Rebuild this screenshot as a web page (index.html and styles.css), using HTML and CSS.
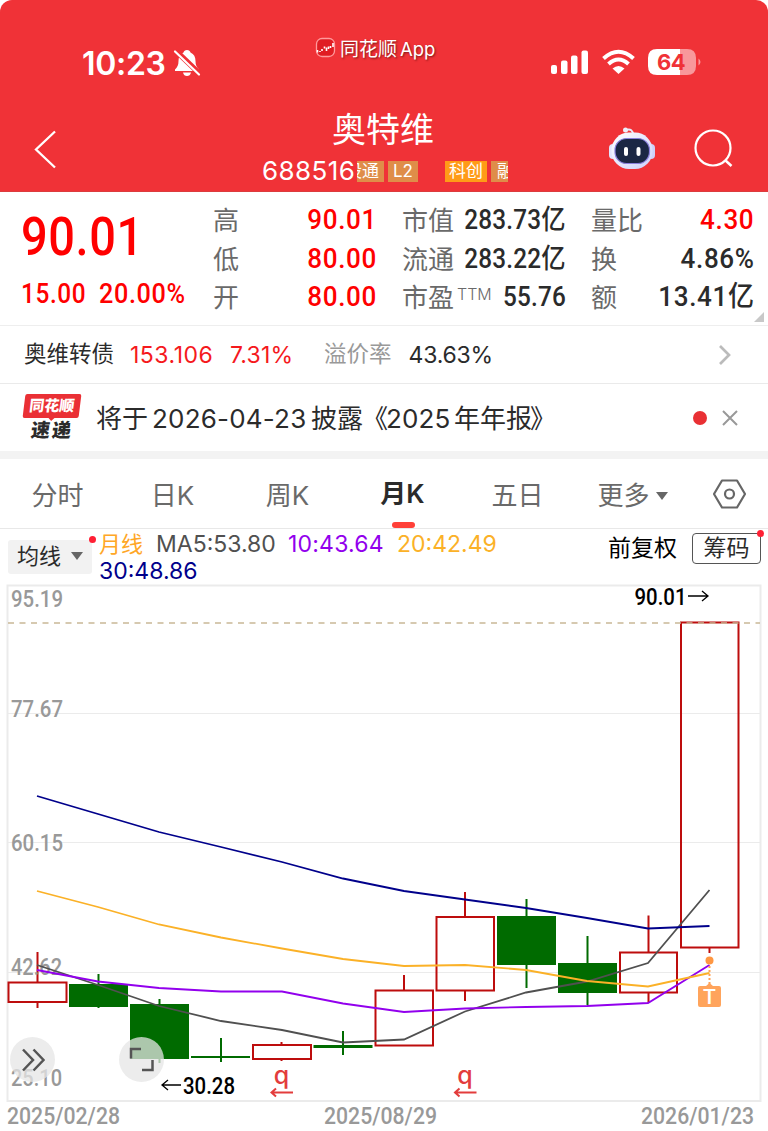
FILE: index.html
```
<!DOCTYPE html>
<html lang="zh-CN">
<head>
    <meta charset="utf-8">
    <title>奥特维 688516</title>
    <link rel="stylesheet" href="styles.css">
</head>
<body>

<header>
    <div class="status">
        <div class="time"><span>10:23</span>
            <svg width="28" height="30" viewBox="0 0 28 30"><path d="M14 1c-2 0-3 1-3.500 2.500C7 5 5.500 8 5.500 12c0 4-1 6-3.500 8.500V22h24v-1.500C23.500 18 22.500 16 22.500 12c0-4-1.500-7-5-8.500C17 2 16 1 14 1z M10 23.500h8c-.5 2.500-2 3.500-4 3.500s-3.500-1-4-3.500z" fill="#fff"/><path d="M3 2L27 25" stroke="#f03237" stroke-width="5.500"/><path d="M2 2.500L26 25.500" stroke="#fff" stroke-width="2.200" stroke-linecap="round"/></svg>
        </div>
        <div class="brand">
            <svg width="22" height="22" viewBox="0 0 22 22"><rect x="1.500" y="1.500" width="18" height="18" rx="5.500" fill="#e01d23" stroke="#ff9a9c" stroke-width="1.300"/><path d="M2.500 13v2.500M5 14v1M7 12v2M9.500 9.500v2M11.500 10.500v3.500M13.500 9.500v2.500M15.500 9v2M18 6v4" stroke="#fff" stroke-width="1.600"/></svg>
            <span>同花顺<em>App</em></span>
        </div>
        <svg class="phone" width="152" height="30" viewBox="0 0 152 30">
            <g fill="#fff"><rect x="1" y="17" width="6" height="9" rx="2"/><rect x="11" y="12.500" width="6.500" height="13.500" rx="2"/><rect x="21" y="7.500" width="6.500" height="18.500" rx="2"/><rect x="31.500" y="2.500" width="6.500" height="23.500" rx="2"/></g>
            <g fill="none" stroke="#fff" stroke-width="4"><path d="M53.500 10.500q15-13.500 30 0"/><path d="M58.500 16q10-9 20 0"/></g><path d="M62.500 20.500q6-5 12 0L68.500 26z" fill="#fff"/>
            <path d="M137 1h-7v26h7q9 0 9-9v-8q0-9-9-9z" fill="#f8989b"/><path d="M130 1h-23q-9 0-9 9v8q0 9 9 9h23z" fill="#fff"/><path d="M148.500 10.500v7q4-3.500 0-7z" fill="#f8989b"/>
            <text x="121" y="21.500" text-anchor="middle" class="battery">64</text>
        </svg>
    </div>
    <div class="nav">
        <svg width="24" height="40" viewBox="0 0 24 40"><path d="M22 1.500L3 19.500l19 18" fill="none" stroke="#fff" stroke-width="2.300"/></svg>
        <div class="stock">
            <h1>奥特维</h1>
            <div class="code"><span class="digits">688516</span><span class="tag cut-left">股通</span><span class="tag l2">L2</span><span class="tag star">科创</span><span class="tag cut-right">融</span></div>
        </div>
        <div class="tools">
            <svg width="48" height="44" viewBox="0 0 48 44">
                <defs><linearGradient id="shell" x2="1" y2="1"><stop stop-color="#fff"/><stop offset="1" stop-color="#cdd1fb"/></linearGradient></defs>
                <path d="M18 4q7-2 7 5" fill="none" stroke="#e8e9fb" stroke-width="2"/><circle cx="17.500" cy="4" r="2.500" fill="#eeeefa"/>
                <rect x="1" y="18" width="8" height="15" rx="4" fill="#e2e4fc"/><rect x="39" y="18" width="8" height="15" rx="4" fill="#ced1fa"/>
                <rect x="3.500" y="6.500" width="41" height="36.500" rx="17.500" fill="url(#shell)"/>
                <rect x="7" y="12.500" width="34.500" height="25" rx="11.500" fill="#1b2744" stroke="#8a80dc" stroke-width="1.200"/>
                <rect x="16" y="21" width="4" height="9" rx="2" fill="#fff"/><rect x="28.500" y="21" width="4" height="9" rx="2" fill="#fff"/>
            </svg>
            <svg width="42" height="44" viewBox="0 0 42 44"><circle cx="21" cy="22" r="17.500" fill="none" stroke="#fff" stroke-width="2.200"/><path d="M33 34l6.500 6" stroke="#fff" stroke-width="2.500"/></svg>
        </div>
    </div>
</header>

<section class="quote">
    <div class="last">
        <div class="price"><b class="din">90.01</b></div>
        <div class="change"><b class="din">15.00</b><b class="din">20.00%</b></div>
    </div>
    <dl>
        <dt>高</dt><dd class="up"><b class="din">90.01</b></dd>
        <dt>低</dt><dd class="up"><b class="din">80.00</b></dd>
        <dt>开</dt><dd class="up"><b class="din">80.00</b></dd>
    </dl>
    <dl class="cap">
        <dt>市值</dt><dd><b class="din">283.73亿</b></dd>
        <dt>流通</dt><dd><b class="din">283.22亿</b></dd>
        <dt>市盈<sup>TTM</sup></dt><dd><b class="din">55.76</b></dd>
    </dl>
    <dl>
        <dt>量比</dt><dd class="up"><b class="din">4.30</b></dd>
        <dt>换</dt><dd><b class="din">4.86%</b></dd>
        <dt>额</dt><dd><b class="din">13.41亿</b></dd>
    </dl>
    <i class="corner"></i>
</section>

<section class="bond">
    <span class="name">奥维转债</span><span class="up v1">153.106</span><span class="up v2">7.31%</span><span class="gray">溢价率</span><span class="v3">43.63%</span>
    <svg width="14" height="22" viewBox="0 0 14 22"><path d="M2 2l9 9-9 9" fill="none" stroke="#bbb" stroke-width="2.700"/></svg>
</section>

<section class="notice">
    <div class="express"><span class="ths">同花顺</span><span class="sudi">速递</span></div>
    <p>将于<span class="date">2026-04-23</span>披露<span class="book">《</span><span class="year">2025</span>年年报<span class="end">》</span></p>
    <i class="dot"></i>
    <svg width="16" height="16" viewBox="0 0 16 16"><path d="M1 1l14 14M15 1L1 15" stroke="#999" stroke-width="2"/></svg>
</section>

<nav>
    <a>分时</a><a>日K</a><a>周K</a><a class="on">月K</a><a>五日</a><a>更多<i class="caret"></i></a>
    <svg width="34" height="30" viewBox="0 0 34 30"><path d="M10 1.500h15L33 15l-8 13.500H10L2 15z" fill="none" stroke="#666" stroke-width="2.200" stroke-linejoin="round"/><circle cx="17.500" cy="15" r="4.500" fill="none" stroke="#666" stroke-width="2.200"/></svg>
</nav>

<section class="legend">
    <div class="ma">均线<i class="caret"></i></div>
    <div class="values">
        <div><span class="cycle">月线</span><span class="ma5">MA5:53.80</span><span class="ma10">10:43.64</span><span class="ma20">20:42.49</span></div>
        <div class="ma30">30:48.86</div>
    </div>
    <div class="adjust">前复权</div>
    <div class="chips">筹码</div>
</section>

<svg class="chart" width="768" height="551" viewBox="0 580 768 551">
    <g class="grid"><path d="M8 713.500H760M8 842.500H760M8 972.500H760"/><path d="M7.500 585.500H760.500V1101H7.500z" stroke-width="2"/></g>
    <g class="rise">
        <path d="M37.500 952v30M37.500 1002v6M281.500 1042v3M281.500 1059v2M404 975v15M465 892v25M465 991v10M648.500 915.500v37M648.500 993v10M709.500 948v5"/>
        <rect x="8.500" y="982.500" width="58" height="19.500"/>
        <rect x="253" y="1045" width="58" height="14"/>
        <rect x="375.500" y="990.500" width="57.500" height="55"/>
        <rect x="436.500" y="917" width="57.500" height="73.500"/>
        <rect x="620" y="952.500" width="57" height="40"/>
        <rect x="681" y="622.500" width="57.500" height="325"/>
    </g>
    <path d="M8 623H760" stroke="#c9b896" stroke-width="1.300" stroke-dasharray="6 5.500"/>
    <g class="axis">
        <text x="11" y="607" textLength="52" lengthAdjust="spacingAndGlyphs">95.19</text>
        <text x="11" y="717" textLength="52" lengthAdjust="spacingAndGlyphs">77.67</text>
        <text x="11" y="851" textLength="52" lengthAdjust="spacingAndGlyphs">60.15</text>
        <text x="11" y="975" textLength="51" lengthAdjust="spacingAndGlyphs">42.62</text>
        <text x="11" y="1086" textLength="51" lengthAdjust="spacingAndGlyphs">25.10</text>
        <text x="7" y="1124" textLength="113" lengthAdjust="spacingAndGlyphs">2025/02/28</text>
        <text x="324" y="1124" textLength="113" lengthAdjust="spacingAndGlyphs">2025/08/29</text>
        <text x="641" y="1124" textLength="113" lengthAdjust="spacingAndGlyphs">2026/01/23</text>
    </g>
    <g class="fall">
        <path d="M98.500 974v34M159.500 999v64M221 1038v24M343 1031v24M526.500 899v89M587.500 936v69"/>
        <rect x="69" y="984" width="59" height="23"/>
        <rect x="130" y="1004" width="59" height="55"/>
        <rect x="191" y="1056" width="59" height="2"/>
        <rect x="313.500" y="1045" width="59" height="3"/>
        <rect x="497" y="916" width="59" height="49"/>
        <rect x="558" y="963" width="59" height="30"/>
    </g>
    <g class="lines">
        <polyline points="37,965 98,985 159,1006 221,1021 282,1030 343,1042.500 404,1039.500 465,1011.500 526,992.500 587,981.500 648,963 709.500,890" stroke="#505050"/>
        <polyline points="37,970 98,981.500 159,988 221,991.500 282,991.500 343,1003.500 404,1012 465,1008.500 526,1007 587,1006 648,1003 709.500,965" stroke="#9200ed"/>
        <polyline points="37,891 98,907 159,924.500 221,937.500 282,948.500 343,959 404,966 465,965 526,970 587,981 648,986.500 709.500,973" stroke="#fbb127"/>
        <polyline points="37,796 98,814 159,832 221,847 282,862 343,878.500 404,891 465,899.500 526,908 587,918 648,928.500 709.500,926" stroke="#00008b"/>
    </g>
    <g class="marks">
        <text x="634.500" y="605" textLength="52" lengthAdjust="spacingAndGlyphs">90.01</text><text x="183" y="1093.500" textLength="52" lengthAdjust="spacingAndGlyphs">30.28</text>
        <path d="M688 596h20M702 591l6 5-6 5M181 1085h-19M168 1080l-6 5 6 5"/>
    </g>
    <g class="q">
        <text x="281.500" y="1084">q</text><text x="465" y="1084">q</text>
        <path d="M293 1092.500h-21M276 1088.500l-4.500 4 4.500 4M476.500 1092.500h-21M459.500 1088.500l-4.500 4 4.500 4"/>
    </g>
    <g class="trade"><path d="M709.500 962v22" stroke="#ffa155" stroke-width="2" stroke-dasharray="2 2"/><circle cx="709.500" cy="960.500" r="4" fill="#ff9742"/><path d="M700 986h6l3.500-3 3.500 3h6q2 0 2 2v17q0 2-2 2h-19q-2 0-2-2v-17q0-2 2-2z" fill="#ffa45c"/><text x="709.500" y="1003.500">T</text></g>
    <g class="buttons"><circle cx="32.500" cy="1059.500" r="22.500"/><circle cx="141.500" cy="1059.500" r="22.500"/><path d="M23 1049.500l10 10.500-10 10.500M33.500 1049.500l10 10.500-10 10.500M131 1058.500v-9.500h10M152.500 1060v10h-10.500"/></g>
</svg>

</body>
</html>
```
FILE: styles.css
```
* {
    box-sizing: border-box;
}
body {
    margin: 0;
    width: 768px;
    height: 1131px;
    overflow: hidden;
    background: #fff;
    color: #2b2b2b;
    font-family: Inter, "Noto Sans CJK SC", sans-serif;
    font-size: 23px;
    font-weight: 400;
}
svg {
    display: block;
    flex: none;
}
header {
    height: 192px;
    background: #f03237;
    color: #fff;
    border-radius: 12px 12px 0 0;
    border-bottom: 1px solid #dc3c3e;
}
.status {
    height: 102px;
    padding: 34px 66px 0 82px;
    display: flex;
    justify-content: space-between;
}
.time {
    display: flex;
    width: 233px;
    padding-top: 14px;
    font-size: 32px;
    line-height: 31px;
    font-weight: 600;
    letter-spacing: -.3px;
}
.time span {
    width: 91px;
}
.time svg {
    margin-top: 1px;
}
.brand {
    display: flex;
    gap: 3px;
    margin-top: 3px;
    height: 24px;
    line-height: 25px;
    font-size: 19px;
    text-shadow: 1px 1px 2px #7d1717;
    width: 235px;
    white-space: nowrap;
}
.brand em {
    font-style: normal;
    font-size: 18.500px;
    margin-left: 3px;
}
.phone {
    margin-top: 14px;
}
.battery {
    font-size: 22px;
    font-weight: 700;
    letter-spacing: -.5px;
    fill: #f03237;
}
.nav {
    height: 89px;
    display: flex;
    padding: 0 34px 0 33px;
}
.nav > svg {
    margin-top: 28px;
}
.stock {
    width: 247px;
    margin-left: 205px;
}
h1 {
    margin: 8px 0 0 -5px;
    font-size: 34px;
    line-height: 40px;
    font-weight: 400;
    text-align: center;
}
.code {
    display: flex;
    margin-top: 7px;
    height: 28px;
    line-height: 28px;
    align-items: center;
}
.digits {
    font-size: 26px;
    letter-spacing: .4px;
    width: 95px;
}
.tag {
    height: 21px;
    line-height: 20px;
    font-size: 17px;
    background: #df8d49;
    overflow: hidden;
    text-align: center;
    flex: none;
}
.cut-left {
    display: flex;
    justify-content: flex-end;
    width: 27px;
    padding-right: 5px;
    white-space: nowrap;
}
.l2 {
    width: 30px;
    margin-left: 4px;
}
.star {
    width: 42px;
    margin: 0 4px 0 27px;
    background: #ff9b17;
}
.cut-right {
    width: 17px;
    padding-left: 6px;
    text-align: left;
}
.tools {
    display: flex;
    gap: 36px;
    margin: 24px 0 0 auto;
}
.quote {
    position: relative;
    display: flex;
    height: 134px;
    padding: 9px 14px 0 21px;
    border-bottom: 1px solid #eee;
}
.din {
    display: inline-block;
    font-family: Roboto, "Noto Sans CJK SC", sans-serif;
    font-weight: 500;
    letter-spacing: .7px;
    margin-right: -.7px;
    transform: scaleX(.93);
    transform-origin: 100% 50%;
    white-space: nowrap;
}
.up {
    color: #f00;
}
.bond .up {
    color: #f5191d;
}
.last {
    width: 192px;
    color: #f00;
}
.last .din {
    transform: scaleX(.87);
    transform-origin: 0 50%;
}
.price {
    margin-top: 3px;
    height: 63px;
    line-height: 63px;
    font-size: 54px;
}
.change {
    display: flex;
    margin-top: 10px;
    line-height: 34px;
    font-size: 28px;
}
.change .din + .din {
    margin-left: 4px;
    transform: scaleX(.9);
}
.quote dl {
    display: grid;
    grid-template-columns: auto minmax(0, 1fr);
    grid-auto-rows: 38.500px;
    line-height: 38px;
    width: 163px;
    margin: 0 26px 0 0;
    font-size: 26px;
}
.quote dl:last-of-type {
    width: auto;
    flex: 1;
    margin-right: 0;
}
.quote .cap {
    width: 164px;
    margin-right: 25px;
}
.quote dt {
    color: #6a6a6a;
    white-space: nowrap;
    line-height: 40px;
}
.quote dd {
    margin: 0;
    font-size: 28px;
    display: flex;
    justify-content: flex-end;
}
.quote .cap dd {
    font-size: 27px;
}
.cap .din {
    letter-spacing: .2px;
    margin-right: 0;
    transform: scaleX(.9);
}
sup {
    font-size: 16px;
    font-weight: 300;
    line-height: 0;
    vertical-align: 7px;
    margin-left: 3px;
}
.corner {
    position: absolute;
    right: 4px;
    bottom: 3px;
    border: 5px solid transparent;
    border-color: transparent #c8c8c8 #c8c8c8 transparent;
}
.bond {
    display: flex;
    align-items: center;
    height: 58px;
    padding: 0 36px 0 24px;
    border-bottom: 1px solid #eaeaea;
}
.bond .name, .bond .gray {
    font-size: 22.500px;
    line-height: 30px;
    margin-top: -1px;
}
.v1 {
    width: 100px;
    margin-left: 16px;
    letter-spacing: .5px;
}
.v2 {
    width: 94px;
    letter-spacing: .2px;
}
.gray {
    color: #999;
}
.v3 {
    margin-left: 17px;
    letter-spacing: -.2px;
}
.bond svg {
    margin-left: auto;
}
.notice {
    display: flex;
    align-items: center;
    height: 75px;
    padding: 0 30px 8px 24px;
    box-shadow: inset 0 -8px #f3f3f3;
}
.express {
    width: 56px;
    height: 48px;
    font-weight: 900;
    text-align: center;
}
.ths {
    position: relative;
    display: block;
    height: 24px;
    line-height: 23px;
    border-radius: 2px;
    transform: skewX(-7deg);
    background: #ea3035;
    color: #fff;
    font-size: 15px;
}
.ths::after {
    content: "";
    position: absolute;
    left: 25px;
    top: 23px;
    border: 4px solid transparent;
    border-top-color: #ea3035;
}
.sudi {
    display: block;
    font-size: 19px;
    line-height: 26px;
    letter-spacing: 2px;
    transform: skewX(-7deg);
}
.notice p {
    display: flex;
    align-items: baseline;
    margin: -2px 0 0 16px;
    font-size: 26px;
    white-space: nowrap;
}
.date {
    width: 154px;
    margin: 0 5px 0 4px;
    letter-spacing: .2px;
}
.book {
    width: 24px;
    margin-left: -1px;
}
.year {
    width: 64px;
    margin-right: 4px;
    letter-spacing: .1px;
}
.end {
    margin-left: -2px;
}
.dot {
    width: 14px;
    height: 14px;
    margin: 0 15px 0 auto;
    border-radius: 50%;
    background: #e93034;
}
nav {
    display: flex;
    align-items: center;
    height: 70px;
    padding: 0 22px 0 0;
    border-bottom: 1px solid #e8e8e8;
    color: #6a6a6a;
    font-size: 26px;
}
nav a {
    width: 115px;
    text-align: center;
    white-space: nowrap;
}
nav .on {
    position: relative;
    color: #2b2b2b;
    font-weight: 600;
    line-height: 68px;
}
.on::after {
    content: "";
    position: absolute;
    left: 47px;
    bottom: 0;
    width: 23px;
    height: 6px;
    border-radius: 3px;
    background: #ff4038;
}
nav svg {
    margin-left: auto;
}
.caret {
    display: inline-block;
    border: 6px solid transparent;
    border-top: 8px solid #666;
    border-bottom: 0;
    margin-left: 6px;
    vertical-align: 5px;
}
.legend {
    display: flex;
    height: 51px;
    padding-left: 8px;
}
.ma {
    position: relative;
    width: 84px;
    height: 34px;
    margin-top: 11px;
    padding-left: 9px;
    background: #f2f2f2;
    border-radius: 3px;
    font-size: 22px;
    line-height: 33px;
    white-space: nowrap;
}
.ma .caret {
    margin-left: 10px;
    vertical-align: 4px;
}
.ma::after, .chips::after {
    content: "";
    position: absolute;
    width: 7px;
    height: 7px;
    top: -4px;
    right: -4px;
    border-radius: 50%;
    background: #ff1f34;
}
.values {
    margin: 2px 0 0 7px;
    width: 509px;
    line-height: 27px;
    white-space: nowrap;
}
.values span {
    display: inline-block;
}
.cycle {
    width: 57px;
    color: #ffa726;
    font-size: 22px;
}
.ma5 {
    width: 132px;
    color: #505050;
}
.ma10 {
    width: 109px;
    color: #9200ed;
    letter-spacing: .2px;
}
.ma20 {
    color: #fbb127;
}
.ma30 {
    color: #00008b;
}
.adjust {
    width: 84px;
    line-height: 39px;
    color: #000;
    white-space: nowrap;
}
.chips {
    position: relative;
    width: 69px;
    height: 31px;
    margin-top: 4px;
    border: 1px solid #555;
    border-radius: 4px;
    text-align: center;
    line-height: 28px;
}
.grid path {
    fill: none;
    stroke: #ebebeb;
}
.chart text {
    font-family: Roboto, sans-serif;
    font-size: 23px;
}
.axis text {
    fill: #999;
    font-weight: 500;
}
.rise path, .rise rect {
    fill: none;
    stroke: #bd0d0d;
    stroke-width: 2;
}
.fall path {
    stroke: #006b00;
    stroke-width: 2;
}
.fall rect {
    fill: #006b00;
}
.lines polyline {
    fill: none;
    stroke-width: 1.800;
}
.marks text {
    font-weight: 500;
    fill: #000;
}
.marks path {
    fill: none;
    stroke: #000;
    stroke-width: 1.300;
}
.chart .q text {
    font-family: Inter, sans-serif;
    font-size: 25px;
    font-weight: 500;
    text-anchor: middle;
    fill: #e33c3c;
}
.q path {
    fill: none;
    stroke: #e33c3c;
    stroke-width: 2;
}
.chart .trade text {
    font-size: 21px;
    font-weight: 500;
    text-anchor: middle;
    fill: #fff;
}
.buttons circle {
    fill: #e6e6e6;
    fill-opacity: .75;
}
.buttons path {
    fill: none;
    stroke: #555;
    stroke-width: 2.500;
}
```
